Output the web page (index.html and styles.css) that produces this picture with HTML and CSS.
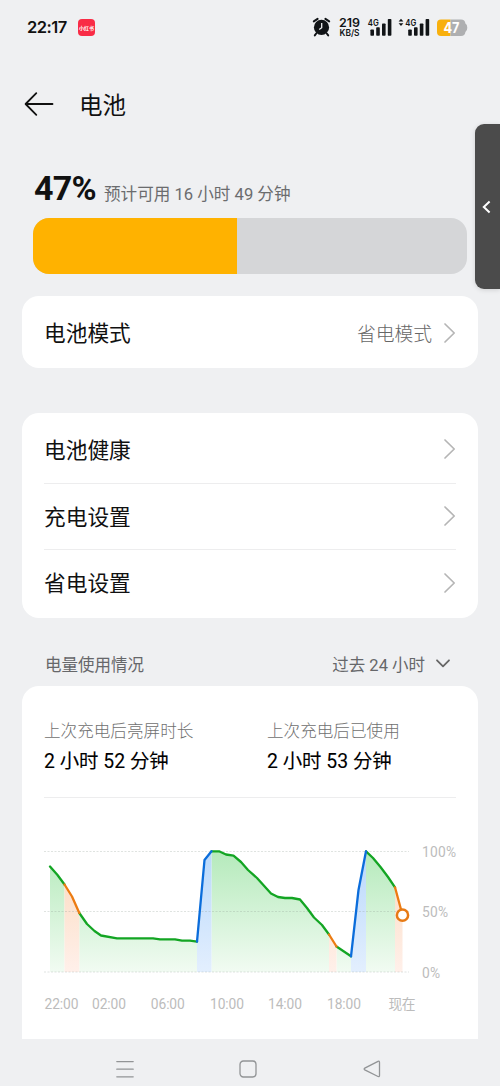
FILE: index.html
```html
<!DOCTYPE html>
<html lang="zh-CN">
<head>
<meta charset="utf-8">
<title>电池</title>
<link rel="stylesheet" href="styles.css">
</head>
<body>
<div class="screen">
  <div class="status">
    <span class="clock">22:17</span>
    <span class="app-badge">小红书</span>
    <svg class="status-icons" width="160" height="26" viewBox="310 14 160 26">
      <g fill="none" stroke="#111417">
        <path d="M313.8 21.4 L317.6 18.8 M325.4 18.8 L329.2 21.4" stroke-width="2" stroke-linecap="round"/>
        <path d="M316.2 33.5 L314.8 35.4 M326.8 33.5 L328.2 35.4" stroke-width="2" stroke-linecap="round"/>
      </g>
      <circle cx="321.5" cy="27.4" r="7.6" fill="#111417"/>
      <path d="M321.7 23 V27.7 L319.2 29.6" fill="none" stroke="#eff0f2" stroke-width="1.3"/>
      <text class="st speed" x="339" y="27" textLength="21" lengthAdjust="spacingAndGlyphs">219</text>
      <text class="st unit" x="339.5" y="36" textLength="20" lengthAdjust="spacingAndGlyphs">KB/S</text>
      <text class="st net" x="367.8" y="25.8" textLength="11" lengthAdjust="spacingAndGlyphs">4G</text>
      <g fill="#111417">
        <rect x="370.4" y="29.4" width="3.6" height="6.4" rx=".8"/>
        <rect x="376.2" y="27.2" width="3.6" height="8.6" rx=".8"/>
        <rect x="382" y="23.4" width="3.6" height="12.4" rx=".8"/>
        <rect x="387.8" y="19" width="3.6" height="16.8" rx=".8"/>
        <path d="M398.6 21.6 L401 18.8 L403.4 21.6 Z M398.6 23.2 L401 26 L403.4 23.2 Z"/>
        <rect x="408.2" y="29.4" width="3.6" height="6.4" rx=".8"/>
        <rect x="414" y="27.2" width="3.6" height="8.6" rx=".8"/>
        <rect x="419.8" y="23.4" width="3.6" height="12.4" rx=".8"/>
        <rect x="425.6" y="19" width="3.6" height="16.8" rx=".8"/>
      </g>
      <text class="st net" x="405.3" y="25.8" textLength="11" lengthAdjust="spacingAndGlyphs">4G</text>
      <path d="M441 19.5 H450.5 V36 H441 Q437 36 437 32 V23.5 Q437 19.5 441 19.5Z" fill="#f8b00d"/>
      <path d="M450.5 19.5 H461 Q465 19.5 465.4 23.5 Q467.3 24.5 467.3 27.8 Q467.3 31 465.4 32 Q465 36 461 36 H450.5Z" fill="#aeafb1"/>
      <text class="st charge" x="443.5" y="33" textLength="16" lengthAdjust="spacingAndGlyphs">47</text>
    </svg>
  </div>

  <header class="header">
    <svg width="30" height="26" viewBox="24 91 30 26"><path d="M52.5 104 H26 M36.3 93.2 L25.6 104 L36.3 114.8" fill="none" stroke="#111" stroke-width="1.8" stroke-linecap="round" stroke-linejoin="round"/></svg>
    <h1>电池</h1>
  </header>

  <section class="level">
    <div class="level-text"><strong>47%</strong><span>预计可用 16 小时 49 分钟</span></div>
    <div class="bar"><div class="bar-fill" style="width:47%"></div></div>
  </section>

  <section class="card mode">
    <div class="row"><span>电池模式</span><span class="value">省电模式</span><svg class="chev" width="13" height="22" viewBox="0 0 13 22"><path d="M2 2 L11.2 11 L2 20"/></svg></div>
  </section>

  <section class="card settings">
    <div class="row"><span>电池健康</span><svg class="chev" width="13" height="22" viewBox="0 0 13 22"><path d="M2 2 L11.2 11 L2 20"/></svg></div>
    <div class="row"><span>充电设置</span><svg class="chev" width="13" height="22" viewBox="0 0 13 22"><path d="M2 2 L11.2 11 L2 20"/></svg></div>
    <div class="row"><span>省电设置</span><svg class="chev" width="13" height="22" viewBox="0 0 13 22"><path d="M2 2 L11.2 11 L2 20"/></svg></div>
  </section>

  <div class="usage-head">
    <span>电量使用情况</span>
    <span class="range">过去 24 小时</span>
    <svg width="16" height="10" viewBox="0 0 16 10"><path d="M2 1.3 L8 7.3 L14 1.3" fill="none" stroke="#666" stroke-width="1.8" stroke-linecap="round" stroke-linejoin="round"/></svg>
  </div>

  <section class="usage">
    <div class="stats">
      <div><p>上次充电后亮屏时长</p><b>2 小时 52 分钟</b></div>
      <div><p>上次充电后已使用</p><b>2 小时 53 分钟</b></div>
    </div>
    <svg class="chart" width="456" height="241" viewBox="22 798 456 241">
      <defs>
        <linearGradient id="green" gradientUnits="userSpaceOnUse" x1="0" y1="851" x2="0" y2="972"><stop offset="0" stop-color="#b5eabb"/><stop offset="1" stop-color="#f1fbf2"/></linearGradient>
        <linearGradient id="blue" gradientUnits="userSpaceOnUse" x1="0" y1="851" x2="0" y2="972"><stop offset="0" stop-color="#b9d8fb"/><stop offset="1" stop-color="#e3effe"/></linearGradient>
        <linearGradient id="orange" gradientUnits="userSpaceOnUse" x1="0" y1="851" x2="0" y2="972"><stop offset="0" stop-color="#fbd9bd"/><stop offset="1" stop-color="#fff0ea"/></linearGradient>
      </defs>
      <g fill="url(#green)">
        <path d="M50 866.5 57.5 875 64.5 884.5V972H50Z"/>
        <path d="M79.3 913 87 924 94.5 931 101 935.5 117 938.3H153L160 939.3H175L182 940.7H190L197 941.7V972H79.3Z"/>
        <path d="M211.5 851.3H219L226 854.5 233.5 855.7 241 862 248 870 257 878 271 893.5 278 897 285 898H292L300 899.5 307 908 314 917.5 322 925 329 934.5V972H211.5Z"/>
        <path d="M336.5 946.5 351 956.3V972H336.5Z"/>
        <path d="M366 851.3 373 858 380.5 867 388 877 395 887.3V972H366Z"/>
      </g>
      <path fill="url(#blue)" d="M197 941.7 204.5 860 211.5 851.3V972H197ZM351 956.3 358.5 890 366 851.3V972H351Z"/>
      <path fill="url(#orange)" d="M64.5 884.5 72 896.5 79.3 913V972H64.5ZM329 934.5 336.5 946.5V972H329ZM395 887.3 402.5 915V972H395Z"/>
      <path class="grid" d="M44 851.5H409M44 911.5H409M44 972H409"/>
      <g class="line">
        <path stroke="#13a523" d="M50 866.5 57.5 875 64.5 884.5M79.3 913 87 924 94.5 931 101 935.5 117 938.3H153L160 939.3H175L182 940.7H190L197 941.7M211.5 851.3H219L226 854.5 233.5 855.7 241 862 248 870 257 878 271 893.5 278 897 285 898H292L300 899.5 307 908 314 917.5 322 925 329 934.5M336.5 946.5 351 956.3M366 851.3 373 858 380.5 867 388 877 395 887.3"/>
        <path stroke="#ec7b12" d="M64.5 884.5 72 896.5 79.3 913M329 934.5 336.5 946.5M395 887.3 402.5 915"/>
        <path stroke="#0b6ddb" d="M197 941.7 204.5 860 211.5 851.3M351 956.3 358.5 890 366 851.3"/>
      </g>
      <circle cx="402.5" cy="915.2" r="5.6" fill="#fff" stroke="#e77a14" stroke-width="2.5"/>
      <g class="axis">
        <text x="422" y="857" textLength="34">100%</text>
        <text x="422" y="917" textLength="26">50%</text>
        <text x="422" y="977.5" textLength="18">0%</text>
      </g>
      <g class="axis">
        <text x="44.5" y="1008.5" textLength="34">22:00</text>
        <text x="92" y="1008.5" textLength="34">02:00</text>
        <text x="150.8" y="1008.5" textLength="34">06:00</text>
        <text x="210" y="1008.5" textLength="34">10:00</text>
        <text x="268" y="1008.5" textLength="34">14:00</text>
        <text x="327" y="1008.5" textLength="34">18:00</text>
        <text x="388.5" y="1008.5" textLength="27">现在</text>
      </g>
    </svg>
  </section>

  <nav class="nav">
    <svg width="18" height="18" viewBox="0 0 18 18"><path d="M.8 1.6H17.2M.8 9.2H17.2M.8 16.8H17.2"/></svg>
    <svg width="18" height="18" viewBox="0 0 18 18"><rect x="1" y="1" width="16" height="16" rx="3.4"/></svg>
    <svg width="18" height="18" viewBox="0 0 18 18"><path d="M15 1.3 1.8 8.1Q.5 9 1.8 9.9L15 16.5Q16.5 17 16.5 15.5V2.5Q16.5.8 15 1.3Z"/></svg>
  </nav>

  <aside class="drawer"><svg width="10" height="14" viewBox="0 0 10 14"><path d="M7.6 1.5 1.8 7 7.6 12.5" fill="none" stroke="#fff" stroke-width="2"/></svg></aside>
</div>
</body>
</html>
```
FILE: styles.css
```css
* { box-sizing: border-box; }
body { margin: 0; background: #eff0f2; }
h1, p { margin: 0; font-weight: 400; }
svg { display: block; flex: none; }
.screen {
  position: relative;
  width: 500px;
  height: 1086px;
  overflow: hidden;
  display: flex;
  flex-direction: column;
  color: #111;
  background: #eff0f2;
  font-family: Roboto, "Noto Sans CJK SC", sans-serif;
}
.status { display: flex; align-items: center; height: 54px; padding: 0 30px 0 27px; flex: none; }
.clock { width: 51px; font: 600 16.5px/20px Inter, sans-serif; letter-spacing: -0.5px; white-space: nowrap; }
.app-badge {
  width: 17px; height: 17px; border-radius: 4px; background: #f92c46; color: #fff;
  font: 700 5px/17px "Noto Sans CJK SC", sans-serif; text-align: center; white-space: nowrap;
}
.status-icons { margin-left: auto; }
.st { font-family: Inter, sans-serif; fill: #111417; }
.speed { font-size: 12px; font-weight: 600; }
.unit { font-size: 9px; font-weight: 600; }
.net { font-size: 9.5px; font-weight: 600; }
.charge { font-size: 14.5px; font-weight: 700; fill: #fff; }
.header { display: flex; align-items: center; gap: 25px; height: 100px; padding-left: 24px; flex: none; }
.header h1 { font-size: 23.5px; line-height: 30px; padding-top: 3px; }
.level { padding: 14px 33px 0; height: 142px; flex: none; }
.level-text { display: flex; align-items: baseline; height: 50px; line-height: 40px; padding-left: 1px; }
.level-text strong { font-size: 34px; font-weight: 700; width: 70px; letter-spacing: -0.8px; }
.level-text span { font-size: 16.6px; color: #6b6c6e; white-space: nowrap; }
.bar { height: 56px; border-radius: 16px; background: #d5d6d8; overflow: hidden; }
.bar-fill { height: 100%; background: #ffb200; }
.card { margin: 0 22px; padding: 0 22px; border-radius: 17px; background: #fff; flex: none; }
.row { display: flex; align-items: center; font-size: 21.7px; }
.row > :first-child { flex: 1; padding-bottom: 2px; }
.value { font-size: 18.8px; font-weight: 300; color: #666; margin-right: 11px; padding-bottom: 1px; }
.chev path { fill: none; stroke: #b5b5b5; stroke-width: 1.7; stroke-linecap: round; stroke-linejoin: round; }
.mode { height: 72px; }
.mode .row { height: 73px; }
.settings { height: 205px; margin-top: 45px; padding-top: 3px; }
.settings .row { height: 66.5px; }
.settings .row + .row { border-top: 1px solid #ededee; }
.usage-head { display: flex; align-items: center; height: 68px; padding: 24px 49px 0 45px; font-size: 16.5px; color: #66676a; flex: none; }
.range { margin-left: auto; margin-right: 10px; }
.usage { margin: 0 22px; height: 353px; border-radius: 17px 17px 0 0; background: #fff; flex: none; }
.stats { display: grid; grid-template-columns: 1fr 189px; margin: 0 22px; height: 112px; padding-top: 32px; border-bottom: 1px solid #ededee; }
.stats p { font-size: 16.6px; line-height: 28px; font-weight: 300; color: #707070; }
.stats b { display: block; font-size: 19.4px; line-height: 32px; font-weight: 400; color: #000; white-space: nowrap; -webkit-text-stroke: 0.1px #000; }
.grid { stroke: #8c9a90; stroke-opacity: .28; stroke-width: 1; stroke-dasharray: 2 1.5; }
.line { fill: none; stroke-width: 2.3; stroke-linejoin: round; stroke-linecap: round; }
.axis { font-size: 13.8px; fill: #bcbcbc; }
.nav { display: grid; grid-template-columns: 18px 18px 18px; gap: 105.5px; padding: 21px 0 0 115.5px; }
.nav svg { fill: none; stroke: #929496; stroke-width: 1.3; stroke-linecap: round; }
.drawer {
  position: absolute; left: 475px; top: 124px; width: 25px; height: 165px; padding-left: 7px;
  display: flex; align-items: center; border-radius: 9px 0 0 9px; background: #4b4b4b; box-shadow: 0 1px 5px #0002;
}
```
